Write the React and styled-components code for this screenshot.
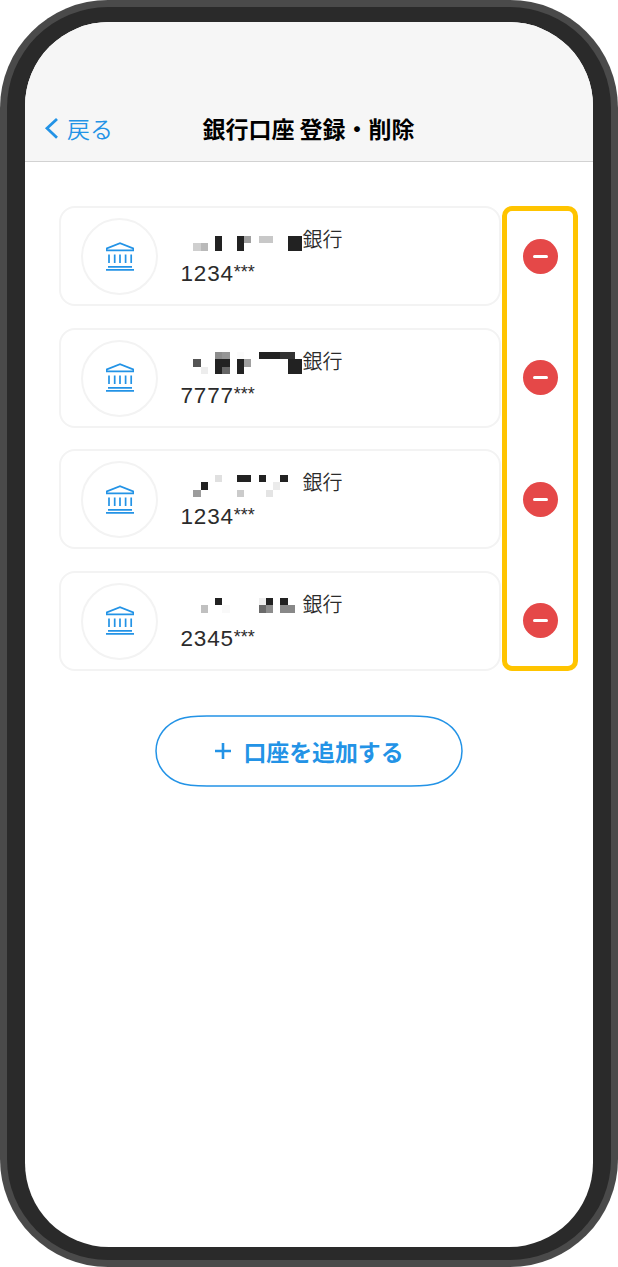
import React from "react";
import styled, { createGlobalStyle } from "styled-components";

const GlobalStyle = createGlobalStyle`
  * { box-sizing: border-box; }
  body { margin: 0; background: #fff; font-family: "Noto Sans CJK JP", sans-serif; }
  button { font: inherit; margin: 0; padding: 0; border: 0; background: none; cursor: pointer; }
`;

const BLUE = "#2393e6";
const DARK = "#222";

const Phone = styled.div`
  width: 617.5px;
  height: 1267px;
  padding: 7px;
  border-radius: 108px;
  background: #4a4a4a;
`;

const Bezel = styled.div`
  height: 1253px;
  padding: 15.3px 17.5px 13px;
  border-radius: 101px;
  background: #2a2a2a;
`;

const Screen = styled.main`
  height: 100%;
  border-radius: 84px;
  overflow: hidden;
  background: #fff;
`;

const Header = styled.header`
  height: 139.5px;
  padding: 82px 20px 0 19.5px;
  display: grid;
  grid-template-columns: 1fr auto 1fr;
  align-items: start;
  background: #f6f6f6;
  border-bottom: 1px solid #d2d2d2;
`;

const BackButton = styled.button`
  display: flex;
  align-items: center;
  gap: 8px;
  height: 48px;
  color: ${BLUE};
  font-size: 23px;
  font-weight: 350;
  line-height: 48px;
`;

const Title = styled.h1`
  margin: 0;
  font-size: 23px;
  font-weight: 600;
  line-height: 48px;
  white-space: nowrap;
  color: #000;
`;

const Accounts = styled.section`
  display: flex;
  align-items: flex-start;
  padding: 44.7px 0 0 34px;
  gap: 1px;
`;

const CardList = styled.ul`
  display: flex;
  flex-direction: column;
  gap: 21.5px;
  width: 442.5px;
  margin: 0;
  padding: 0;
  list-style: none;
`;

const Card = styled.li`
  display: flex;
  height: 100px;
  padding: 10px 0 0 20.5px;
  gap: 22px;
  border: 2px solid #f3f3f3;
  border-radius: 16px;
`;

const IconCircle = styled.div`
  display: grid;
  place-items: center;
  width: 77px;
  height: 77px;
  border: 2px solid #f3f3f3;
  border-radius: 50%;
`;

const Details = styled.div`
  display: flex;
  flex-direction: column;
  color: #2b2b2b;
`;

const NameRow = styled.div`
  display: flex;
  height: 36px;
  padding-left: 12.5px;
`;

const Mosaic = styled.svg`
  display: block;
  flex: none;
  width: 110px;
  height: 36px;
`;

const BankSuffix = styled.span`
  font-size: 20px;
  font-weight: 350;
  line-height: 42px;
`;

const AccountNumber = styled.span`
  display: flex;
  padding-left: 0.5px;
  font-family: "Liberation Sans", "Noto Sans CJK JP", sans-serif;
  font-size: 22.5px;
  line-height: 40px;
  letter-spacing: 0.8px;
`;

const Mask = styled.span`
  font-size: 18px;
  line-height: 36px;
  letter-spacing: 0;
`;

const RemoveColumn = styled.div`
  display: flex;
  flex-direction: column;
  align-items: center;
  justify-content: space-between;
  width: 76px;
  height: 465px;
  padding: 27.5px 0 28px;
  border: 5px solid #ffc400;
  border-radius: 10px;
`;

const RemoveButton = styled.button`
  display: grid;
  place-items: center;
  width: 35px;
  height: 35px;
  border-radius: 50%;
  background: #e54848;

  &::before {
    content: "";
    width: 15px;
    height: 3px;
    border-radius: 1.5px;
    background: #fff;
  }
`;

const AddButton = styled.button`
  display: grid;
  width: 308px;
  height: 72px;
  margin: 43.2px auto 0 130px;
  color: ${BLUE};

  > * { grid-area: 1 / 1; }
`;

const AddLabel = styled.span`
  display: flex;
  align-items: center;
  justify-content: center;
  gap: 11px;
  padding-left: 1px;
  font-size: 22.9px;
  font-weight: 600;
`;

const DARKER = "#333";

// Each cell: [column, row, colour]
const accounts = [
  {
    number: "1234",
    top: 18,
    cells: [
      [0, 1, "#cfcfcf"], [1, 1, "#b9b9b9"],
      [3, 0, DARK], [3, 1, DARK],
      [6, 0, DARK], [6, 1, DARK], [7, 0, "#a0a0a0"],
      [9, 0, "#c8c8c8"], [10, 0, "#c8c8c8"],
      [13, 0, DARK], [14, 0, DARK], [13, 1, DARK], [14, 1, DARK],
    ],
  },
  {
    number: "7777",
    top: 12,
    cells: [
      [0, 1, "#555"], [1, 2, "#ededed"],
      [3, 0, "#8c8c8c"], [4, 0, "#959595"],
      [3, 1, DARK], [4, 1, DARK], [3, 2, DARK], [4, 2, "#666"],
      [6, 0, "#fbfbfb"], [6, 1, DARK], [6, 2, DARK], [7, 1, "#a0a0a0"],
      [9, 0, DARK], [10, 0, DARK], [11, 0, DARK], [12, 0, DARKER], [13, 0, DARKER],
      [13, 1, DARK], [14, 1, DARK], [13, 2, DARK], [14, 2, DARK],
    ],
  },
  {
    number: "1234",
    top: 14,
    cells: [
      [0, 2, "#9c9c9c"], [1, 1, DARK], [3, 0, "#e0e0e0"],
      [6, 0, DARK], [7, 0, DARK], [6, 2, "#cbcbcb"],
      [9, 0, DARK], [10, 2, "#e4e4e4"], [11, 1, "#ebebeb"], [12, 0, DARK],
    ],
  },
  {
    number: "2345",
    top: 15,
    cells: [
      [1, 1, "#c0c0c0"], [3, 0, DARK], [4, 1, "#f9f9f9"],
      [9, 0, "#eee"], [10, 0, DARK], [9, 1, "#6a6a6a"], [10, 1, "#8c8c8c"],
      [12, 0, DARK], [12, 1, "#888"], [13, 1, "#888"],
    ],
  },
];

const CELL = 7.26;

function BankIcon() {
  return (
    <svg width="28" height="30" viewBox="0 0 28 30" fill="none" stroke={BLUE} strokeWidth="1.7">
      <path d="M.8 8.4V6.4L14 1.1l13.2 5.3v2Z" />
      <path d="M3 12.5v8.4M8.7 12.5v8.4M14 12.5v8.4M19.6 12.5v8.4M25.2 12.5v8.4" />
      <path d="M2 24.8h24M0 27.9h28" />
    </svg>
  );
}

function ChevronLeft() {
  return (
    <svg width="15" height="22" viewBox="0 0 15 22" fill="none" stroke={BLUE} strokeWidth="2.8">
      <path d="M13 1.9 3 11.3l10 9.4" />
    </svg>
  );
}

function AccountCard({ number, cells, top }) {
  return (
    <Card>
      <IconCircle><BankIcon /></IconCircle>
      <Details>
        <NameRow>
          <Mosaic viewBox="0 0 110 36" shapeRendering="crispEdges">
            {cells.map(([x, y, fill]) => (
              <rect key={`${x}-${y}`} x={x * CELL + 0.3} y={top + y * CELL + 0.2} width={CELL} height={CELL} fill={fill} />
            ))}
          </Mosaic>
          <BankSuffix>銀行</BankSuffix>
        </NameRow>
        <AccountNumber>{number}<Mask>***</Mask></AccountNumber>
      </Details>
    </Card>
  );
}

export default function App() {
  return (
    <>
      <GlobalStyle />
      <Phone>
        <Bezel>
          <Screen>
            <Header>
              <BackButton><ChevronLeft />戻る</BackButton>
              <Title>銀行口座 登録・削除</Title>
            </Header>
            <Accounts>
              <CardList>
                {accounts.map((account, i) => <AccountCard key={i} {...account} />)}
              </CardList>
              <RemoveColumn>
                {accounts.map((_, i) => <RemoveButton key={i} aria-label="削除" />)}
              </RemoveColumn>
            </Accounts>
            <AddButton>
              <svg width="308" height="72" viewBox="0 0 308 72" fill="none" stroke={BLUE} strokeWidth="1.5">
                <path d="M52 1H256C270 1 276 1.4 283 4C297 9 307 21 307 36S297 63 283 68C276 70.6 270 71 256 71H52C38 71 32 70.6 25 68C11 63 1 51 1 36S11 9 25 4C32 1.4 38 1 52 1Z" />
              </svg>
              <AddLabel>
                <svg width="18" height="18" viewBox="0 0 18 18" stroke={BLUE} strokeWidth="2.6">
                  <path d="M1 9h16M9 1v16" />
                </svg>
                口座を追加する
              </AddLabel>
            </AddButton>
          </Screen>
        </Bezel>
      </Phone>
    </>
  );
}
